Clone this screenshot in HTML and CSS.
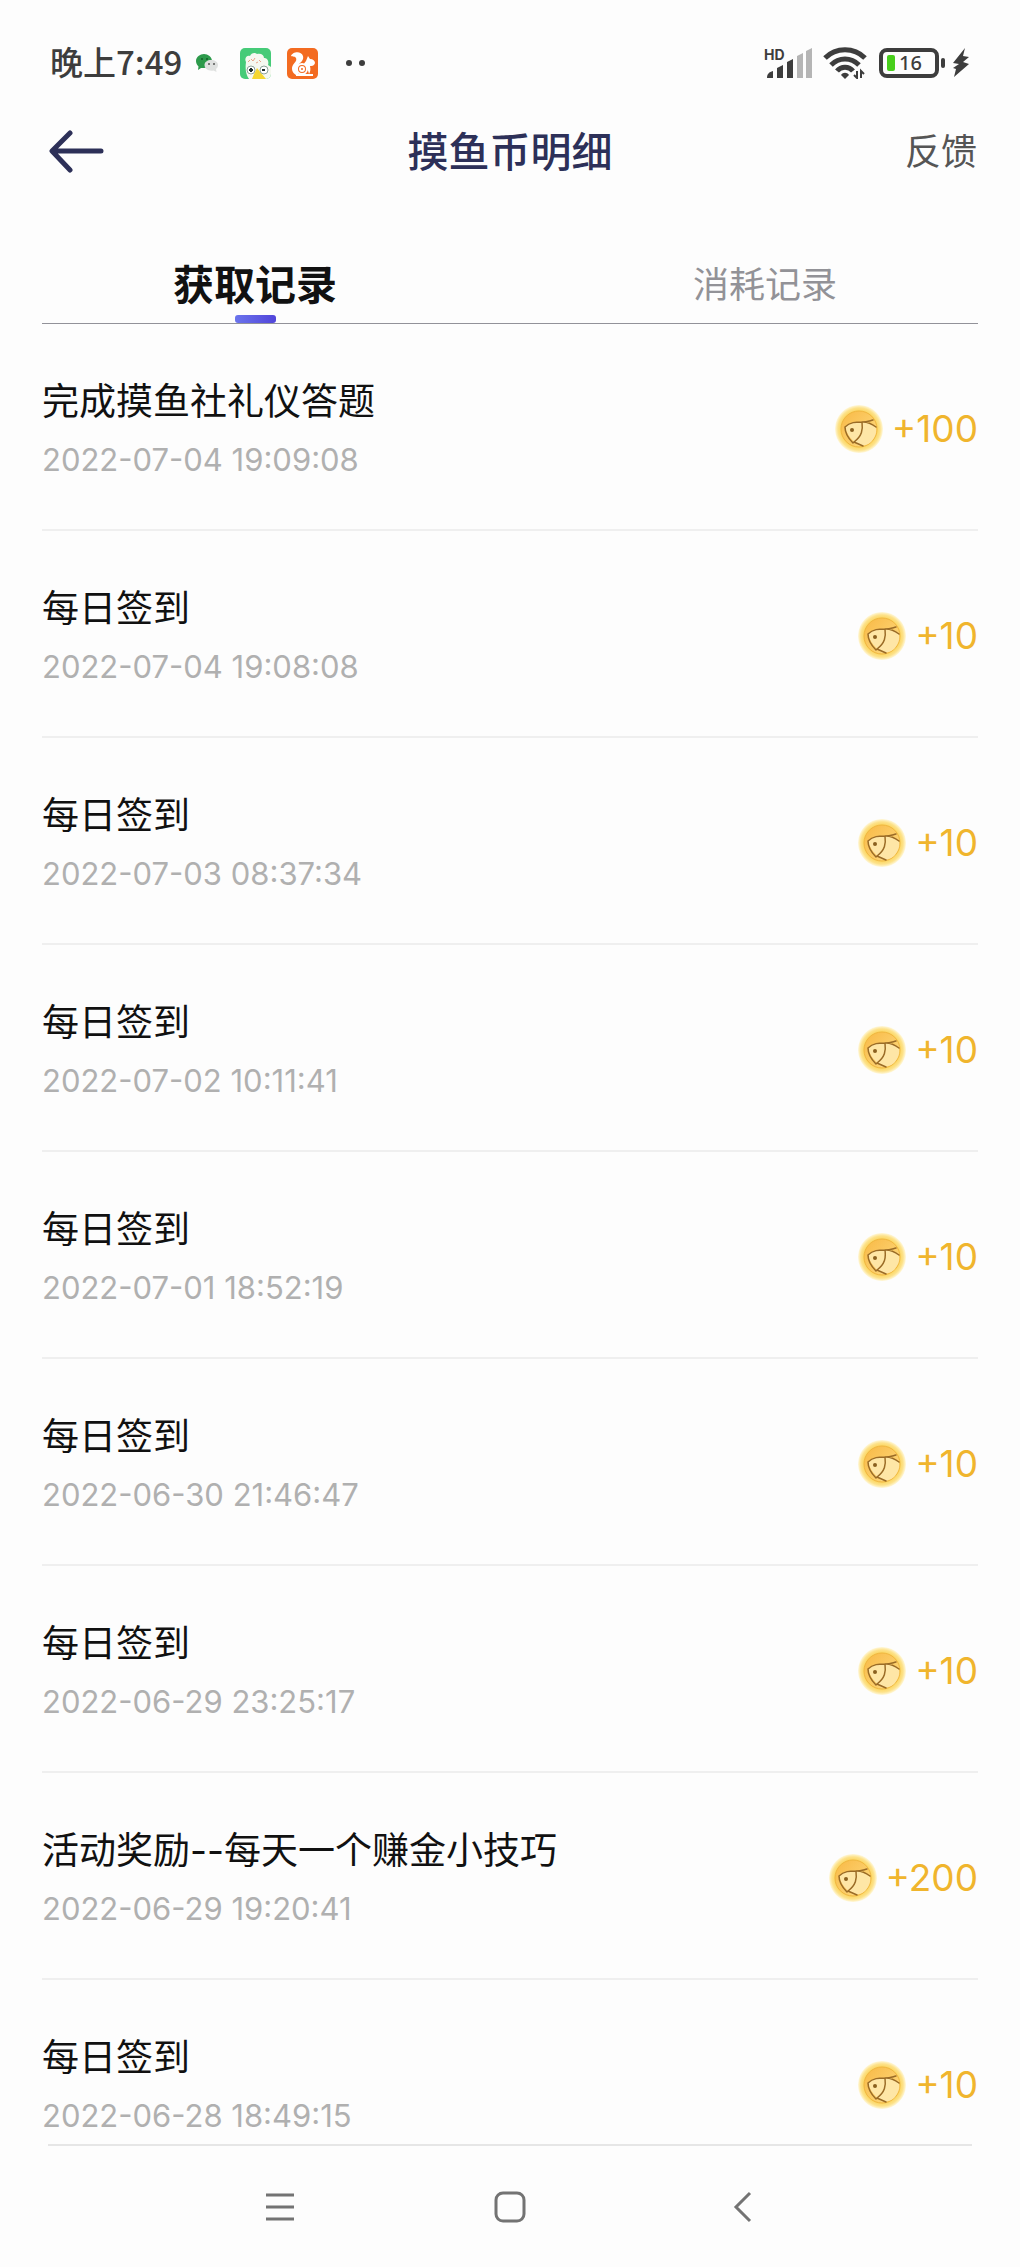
FILE: index.html
```html
<!DOCTYPE html>
<html lang="zh-CN">
<head>
<meta charset="utf-8">
<meta name="viewport" content="width=device-width, initial-scale=1">
<title>摸鱼币明细</title>
<link rel="stylesheet" href="styles.css">
</head>
<body>
<svg class="defs" aria-hidden="true">
  <defs>
    <radialGradient id="coin-rim" cx=".5" cy=".5" r=".5">
      <stop offset=".7" stop-color="#fbd254"/>
      <stop offset=".88" stop-color="#fde28a"/>
      <stop offset="1" stop-color="#fff8dc"/>
    </radialGradient>
    <linearGradient id="coin-face" x1="0" y1="0" x2="1" y2="1">
      <stop offset="0" stop-color="#f9b945"/>
      <stop offset="1" stop-color="#fddc83"/>
    </linearGradient>
    <symbol id="coin" viewBox="0 0 48 48">
      <circle cx="24" cy="24" r="24" fill="url(#coin-rim)"/>
      <circle cx="24" cy="24" r="18" fill="url(#coin-face)" stroke="#f0b740" stroke-width="1"/>
      <path d="M10 22c4-4 9-5 17-5 6 0 12 2 14 6 1 6-2 10-5 14-5 4-9 4-13 3-6-5-11-10-13-18z" fill="#fee6a6"/>
      <path d="M18 38C13 33 10 28 10 22c5-5 11-5 17-5 5 0 7-1 11-2M28 17c4 0 9 2 13 5M27 17c1 8 0 14-8 20l9 4" fill="none" stroke="#9a6b26" stroke-width="1.500" stroke-linecap="round"/>
      <circle cx="17" cy="25" r="2" fill="#8a601f"/>
    </symbol>
  </defs>
</svg>

<div class="screen">
  <div class="status">
    <span class="clock">晚上7:49</span>
    <svg class="wechat" viewBox="0 0 22 18" width="22" height="18" aria-hidden="true">
      <path d="M8 0c4 0 8 3 8 7s-3 7-8 7l-3 0-3 2 .5-3.500C1 11 0 9 0 7c0-4 4-7 8-7z" fill="#2d9a4b"/>
      <path d="M15 6c4 0 7 2 7 5 0 2-1 3-2 4l.5 3-3-1.500c-5 1-9-2-9-5.500 0-3 3-5 6.500-5z" fill="#dfe1e0"/>
      <circle cx="6" cy="5" r="1" fill="#155c29"/><circle cx="11" cy="5" r="1" fill="#155c29"/>
      <circle cx="13" cy="10" r="1" fill="#555"/><circle cx="18" cy="10" r="1" fill="#555"/>
    </svg>
    <svg class="app" viewBox="0 0 31 31" width="31" height="31" aria-hidden="true">
      <rect width="31" height="31" rx="5" fill="#46cb78"/>
      <path d="M6 14c-2-4 1-7 4-6 1-3 5-4 7-2 4-1 7 1 7 4 4 0 5 4 4 7l3 2v7a5 5 0 0 1-5 5H9c-3-4-4-10-3-17z" fill="#f5f8f0"/>
      <path d="M17 20l9 11H12l2-5z" fill="#f4d631"/>
      <circle cx="11" cy="22" r="4" fill="#fff" stroke="#8fa39a" stroke-width="1"/>
      <circle cx="24" cy="22" r="4" fill="#fff" stroke="#8fa39a" stroke-width="1"/>
      <path d="M9 22h4M11 20v4M22 22h3" stroke="#1d2c28" stroke-width="2"/>
      <path d="M11 11l2 2 2-3M19 12l2 2M8 14l2-2M16 15l2-1" stroke="#e8a48a" fill="none"/>
    </svg>
    <svg class="app" viewBox="0 0 31 31" width="31" height="31" aria-hidden="true">
      <rect width="31" height="31" rx="5" fill="#f36b21"/>
      <path d="M4 8c1-4 10-6 12 0 1 4-2 6-4 8-2 3-2 7 0 11H9c-4-2-5-7-3-10 2-3 4-4 3-7-1-2-3-1-5-2z" fill="#fff"/>
      <path d="M19 13l2-5 2 3c3 0 5 2 5 4-1 3-3 3-5 3 1 4 0 6-1 8-1-5-3-8-6-9z" fill="#fff"/>
      <circle cx="15" cy="21" r="5" fill="#f36b21" stroke="#fff" stroke-width="2"/>
      <circle cx="15" cy="21" r="2" fill="none" stroke="#fff" stroke-width="2"/>
      <path d="M9 27h17" stroke="#fff" stroke-width="2"/>
    </svg>
    <svg class="more" viewBox="0 0 20 6" width="20" height="6" aria-hidden="true">
      <circle cx="3" cy="3" r="3" fill="#3d3d3d"/><circle cx="16" cy="3" r="3" fill="#3d3d3d"/>
    </svg>
    <div class="system">
      <svg viewBox="0 0 50 32" width="50" height="32" role="img" aria-label="信号">
        <text x="1" y="13" class="hd">HD</text>
        <path d="M4 31c0-4 2-6 6-7v7zM14 31V21l6-3v13zM24 31V15l6-3v19z" fill="#3d3d3d"/>
        <path d="M34 31V9l6-3v25zM43 31V4l6-3v30z" fill="#b5b5b5"/>
      </svg>
      <svg class="wifi" viewBox="0 0 44 32" width="44" height="32" role="img" aria-label="无线网络">
        <path d="M2 11c11-11 29-11 40 0M8 18c8-8 20-8 28 0M14 24c4-5 12-5 16 0" fill="none" stroke="#3d3d3d" stroke-width="5"/>
        <path d="M18 28c2-3 6-3 8 0l-4 4z" fill="#3d3d3d"/>
        <path d="M34 24v7l-3-3M38 31v-7l3 3" fill="none" stroke="#3d3d3d" stroke-width="2"/>
      </svg>
      <span class="battery"><span class="charge"></span>16</span>
      <span class="cap"></span>
      <svg class="bolt" viewBox="0 0 18 30" width="18" height="30" role="img" aria-label="充电中">
        <path d="M13 0L1 15l6 1-6 4 3 1-2 8 15-13-6-2 6-5-6-1z" fill="#3d3d3d"/>
      </svg>
    </div>
  </div>

  <header class="header">
    <button class="back" type="button" aria-label="返回">
      <svg viewBox="0 0 64 44" width="64" height="44" aria-hidden="true">
        <path d="M27 3L9 21l18 19M10 21h48" fill="none" stroke="#2d3058" stroke-width="5" stroke-linecap="round" stroke-linejoin="round"/>
      </svg>
    </button>
    <h1 class="title">摸鱼币明细</h1>
    <button class="feedback" type="button">反馈</button>
  </header>

  <div class="tabs" role="tablist">
    <button class="tab active" type="button" role="tab" aria-selected="true">获取记录</button>
    <button class="tab" type="button" role="tab" aria-selected="false">消耗记录</button>
  </div>

  <ul class="list">
    <li class="row"><div class="info"><span class="name">完成摸鱼社礼仪答题</span><time class="time">2022-07-04 19:09:08</time></div><svg class="coin" aria-hidden="true"><use href="#coin"/></svg><span class="amount">+100</span></li>
    <li class="row"><div class="info"><span class="name">每日签到</span><time class="time">2022-07-04 19:08:08</time></div><svg class="coin" aria-hidden="true"><use href="#coin"/></svg><span class="amount">+10</span></li>
    <li class="row"><div class="info"><span class="name">每日签到</span><time class="time">2022-07-03 08:37:34</time></div><svg class="coin" aria-hidden="true"><use href="#coin"/></svg><span class="amount">+10</span></li>
    <li class="row"><div class="info"><span class="name">每日签到</span><time class="time">2022-07-02 10:11:41</time></div><svg class="coin" aria-hidden="true"><use href="#coin"/></svg><span class="amount">+10</span></li>
    <li class="row"><div class="info"><span class="name">每日签到</span><time class="time">2022-07-01 18:52:19</time></div><svg class="coin" aria-hidden="true"><use href="#coin"/></svg><span class="amount">+10</span></li>
    <li class="row"><div class="info"><span class="name">每日签到</span><time class="time">2022-06-30 21:46:47</time></div><svg class="coin" aria-hidden="true"><use href="#coin"/></svg><span class="amount">+10</span></li>
    <li class="row"><div class="info"><span class="name">每日签到</span><time class="time">2022-06-29 23:25:17</time></div><svg class="coin" aria-hidden="true"><use href="#coin"/></svg><span class="amount">+10</span></li>
    <li class="row"><div class="info"><span class="name">活动奖励--每天一个赚金小技巧</span><time class="time">2022-06-29 19:20:41</time></div><svg class="coin" aria-hidden="true"><use href="#coin"/></svg><span class="amount">+200</span></li>
    <li class="row"><div class="info"><span class="name">每日签到</span><time class="time">2022-06-28 18:49:15</time></div><svg class="coin" aria-hidden="true"><use href="#coin"/></svg><span class="amount">+10</span></li>
  </ul>

  <nav class="navbar" aria-label="系统导航">
    <button class="key" type="button" aria-label="最近任务">
      <svg viewBox="0 0 32 32" width="32" height="32" aria-hidden="true"><path d="M2 4h28M2 16h28M2 28h28" stroke="#737373" stroke-width="3"/></svg>
    </button>
    <button class="key" type="button" aria-label="主屏幕">
      <svg viewBox="0 0 32 32" width="32" height="32" aria-hidden="true"><rect x="2" y="2" width="28" height="28" rx="7" fill="none" stroke="#737373" stroke-width="3"/></svg>
    </button>
    <button class="key" type="button" aria-label="返回上一级">
      <svg viewBox="0 0 32 32" width="32" height="32" aria-hidden="true"><path d="M26 2L12 16l14 14" fill="none" stroke="#737373" stroke-width="3"/></svg>
    </button>
  </nav>
</div>
</body>
</html>
```

FILE: styles.css
```css
* {
  box-sizing: border-box;
}

body {
  margin: 0;
  background: #fdfdfd;
  color: #111;
  font-family: Inter, "Noto Sans CJK SC", sans-serif;
}

button {
  padding: 0;
  border: 0;
  background: none;
  font: inherit;
  color: inherit;
}

svg {
  display: block;
  flex: none;
}

.defs {
  position: absolute;
  width: 0;
  height: 0;
}

.screen {
  display: flex;
  flex-direction: column;
  height: 100vh;
}

/* Phone status bar */
.status {
  display: flex;
  align-items: center;
  flex: none;
  padding: 39px 50px 0;
  color: #3d3d3d;
}

.clock {
  padding-bottom: 4px;
  font-family: "Noto Sans CJK SC", sans-serif;
  font-size: 33px;
  font-weight: 500;
  line-height: 44px;
}

.wechat {
  margin: 0 22px 0 14px;
}

.app {
  margin-right: 16px;
}

.more {
  margin-left: 12px;
}

.system {
  display: flex;
  align-items: center;
  margin-left: auto;
}

.hd {
  font: 700 14px Inter, sans-serif;
  fill: #3d3d3d;
}

.wifi {
  margin: 0 12px 0 10px;
}

.battery {
  display: flex;
  align-items: center;
  gap: 4px;
  width: 60px;
  height: 30px;
  padding-left: 4px;
  border: 4px solid #3d3d3d;
  border-radius: 8px;
  font: 500 20px/22px "Noto Sans", sans-serif;
}

.charge {
  width: 8px;
  height: 16px;
  border-radius: 2px;
  background: #48cf1c;
}

.cap {
  width: 4px;
  height: 10px;
  margin: 0 7px 0 2px;
  border-radius: 2px;
  background: #3d3d3d;
}

/* Page header */
.header {
  display: grid;
  grid-template-columns: 1fr auto 1fr;
  align-items: center;
  flex: none;
  height: 130px;
  padding: 0 43px;
}

.back {
  justify-self: start;
}

.title {
  margin: 0;
  color: #2d3058;
  font-size: 41px;
  font-weight: 500;
  line-height: 60px;
}

.feedback {
  justify-self: end;
  color: #555;
  font-size: 36px;
  line-height: 60px;
}

/* Tabs */
.tabs {
  display: grid;
  grid-template-columns: 1fr 1fr;
  flex: none;
  padding-top: 30px;
}

.tab {
  display: flex;
  flex-direction: column;
  align-items: center;
  height: 76px;
  color: #929297;
  font-size: 36px;
  line-height: 76px;
}

.active {
  color: #111;
  font-size: 41px;
  font-weight: 700;
}

.active::after {
  flex: none;
  width: 41px;
  height: 8px;
  margin-top: -8px;
  border-radius: 3px;
  background: linear-gradient(90deg, #6b74ec, #5145da);
  content: "";
}

/* Records */
.list {
  flex: 1;
  min-height: 0;
  margin: 0 42px;
  padding: 0;
  overflow: hidden;
  border-top: 1px solid #929299;
  list-style: none;
}

.row {
  display: flex;
  align-items: center;
  height: 207px;
  padding-top: 4px;
  border-bottom: 2px solid #efefef;
}

.info {
  display: flex;
  flex-direction: column;
  flex: 1;
  padding-bottom: 6px;
}

.name {
  font-size: 37px;
  line-height: 68px;
}

.time {
  color: #b0b0b0;
  font-size: 31px;
  line-height: 48px;
}

.coin {
  width: 48px;
  height: 48px;
  margin-right: 9px;
}

.amount {
  color: #f0b52d;
  font-size: 37px;
  line-height: 48px;
}

/* System navigation keys */
.navbar {
  display: grid;
  grid-template-columns: repeat(3, 1fr);
  flex: none;
  height: 123px;
  margin: 0 48px;
  padding: 0 117px;
  border-top: 2px solid #e6e6e6;
}

.key {
  display: flex;
  align-items: center;
  justify-content: center;
}
```
